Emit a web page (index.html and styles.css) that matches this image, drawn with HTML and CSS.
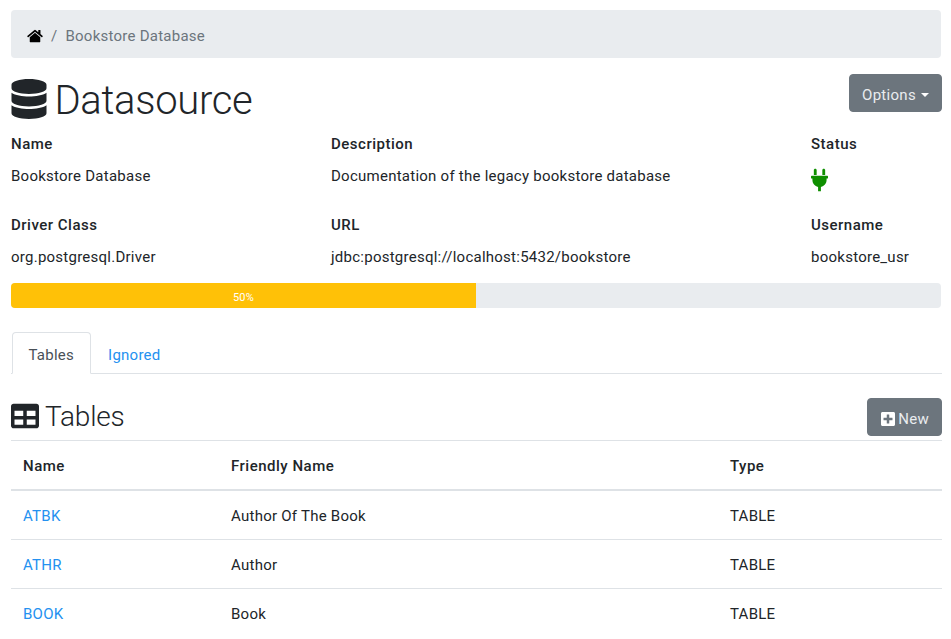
FILE: index.html
```html
<!DOCTYPE html>
<html lang="en">
<head>
  <meta charset="UTF-8">
  <title>Datasource</title>
  <link rel="stylesheet" href="styles.css">
</head>
<body>
  <nav class="breadcrumb">
    <a href="#" class="home-link"><svg class="icon" viewBox="0 0 576 512"><path d="M280.37 148.26L96 300.11V464a16 16 0 0 0 16 16H464a16 16 0 0 0 16-16V300L295.67 148.26a12.19 12.19 0 0 0-15.3 0zM571.6 251.47L488 182.56V44.05a12 12 0 0 0-12-12h-56a12 12 0 0 0-12 12v72.61L318.47 43a48 48 0 0 0-61 0L4.34 251.47a12 12 0 0 0-1.6 16.9l25.5 31A12 12 0 0 0 45.15 301l235.22-193.74a12.19 12.19 0 0 1 15.3 0L530.9 301a12 12 0 0 0 16.9-1.6l25.5-31a12 12 0 0 0-1.7-16.93z"/></svg></a>
    <span class="crumb-sep">/</span>
    <span class="crumb-active">Bookstore Database</span>
  </nav>

  <div class="page-head">
    <h1><svg class="icon" viewBox="0 0 448 512"><path d="M448 73.143v45.714C448 159.143 347.667 192 224 192S0 159.143 0 118.857V73.143C0 32.857 100.333 0 224 0s224 32.857 224 73.143zM448 176v102.857C448 319.143 347.667 352 224 352S0 319.143 0 278.857V176c48.125 33.143 136.208 48.572 224 48.572S399.874 209.143 448 176zm0 160v102.857C448 479.143 347.667 512 224 512S0 479.143 0 438.857V336c48.125 33.143 136.208 48.572 224 48.572S399.874 369.143 448 336z"/></svg> Datasource</h1>
    <button type="button" class="btn">Options<span class="caret"></span></button>
  </div>

  <div class="details">
    <div class="detail-label">Name</div>
    <div class="detail-label">Description</div>
    <div class="detail-label">Status</div>
    <div class="detail-value">Bookstore Database</div>
    <div class="detail-value">Documentation of the legacy bookstore database</div>
    <div class="detail-value"><svg class="icon plug" viewBox="0 0 384 512"><path d="M256 144V32c0-17.673 14.327-32 32-32s32 14.327 32 32v112h-64zm112 16H16c-8.837 0-16 7.163-16 16v32c0 8.837 7.163 16 16 16h16v32c0 77.406 54.969 141.971 128 156.796V512h64v-99.204c73.031-14.825 128-79.39 128-156.796v-32h16c8.837 0 16-7.163 16-16v-32c0-8.837-7.163-16-16-16zm-240-16V32c0-17.673-14.327-32-32-32S64 14.327 64 32v112h64z"/></svg></div>
    <div class="detail-label">Driver Class</div>
    <div class="detail-label">URL</div>
    <div class="detail-label">Username</div>
    <div class="detail-value">org.postgresql.Driver</div>
    <div class="detail-value">jdbc:postgresql://localhost:5432/bookstore</div>
    <div class="detail-value">bookstore_usr</div>
  </div>

  <div class="progress"><div class="progress-bar" style="width: 50%">50%</div></div>

  <ul class="tabs">
    <li class="tab active">Tables</li>
    <li class="tab"><a href="#">Ignored</a></li>
  </ul>

  <div class="section-head">
    <h3><svg class="icon" viewBox="0 0 512 512"><path d="M464 32H48C21.49 32 0 53.49 0 80v352c0 26.51 21.49 48 48 48h416c26.51 0 48-21.49 48-48V80c0-26.51-21.49-48-48-48zM224 416H64v-96h160v96zm0-160H64v-96h160v96zm224 160H288v-96h160v96zm0-160H288v-96h160v96z"/></svg> Tables</h3>
    <button type="button" class="btn btn-new"><svg class="icon" viewBox="0 0 448 512"><path d="M400 32H48C21.5 32 0 53.5 0 80v352c0 26.5 21.5 48 48 48h352c26.5 0 48-21.5 48-48V80c0-26.5-21.5-48-48-48zm-32 252c0 6.6-5.4 12-12 12h-92v92c0 6.6-5.4 12-12 12h-56c-6.6 0-12-5.4-12-12v-92H92c-6.6 0-12-5.4-12-12v-56c0-6.6 5.4-12 12-12h92v-92c0-6.6 5.4-12 12-12h56c6.6 0 12 5.4 12 12v92h92c6.6 0 12 5.4 12 12v56z"/></svg> New</button>
  </div>

  <table class="data-table">
    <thead>
      <tr><th class="col-name">Name</th><th class="col-friendly">Friendly Name</th><th>Type</th></tr>
    </thead>
    <tbody>
      <tr><td><a href="#">ATBK</a></td><td>Author Of The Book</td><td>TABLE</td></tr>
      <tr><td><a href="#">ATHR</a></td><td>Author</td><td>TABLE</td></tr>
      <tr><td><a href="#">BOOK</a></td><td>Book</td><td>TABLE</td></tr>
    </tbody>
  </table>
</body>
</html>
```

FILE: styles.css
```css
* {
  box-sizing: border-box;
}

body {
  margin: 0;
  padding: 10px 9px 0 11px;
  font-family: Roboto, "Liberation Sans", sans-serif;
  font-size: 15px;
  line-height: 24px;
  letter-spacing: 0.25px;
  color: #212529;
  background: #fff;
}

a {
  color: #2491f0;
  text-decoration: none;
}

.icon {
  display: inline-block;
  height: 1em;
  fill: currentColor;
  vertical-align: -0.125em;
}

.breadcrumb {
  display: flex;
  align-items: center;
  height: 48px;
  margin-right: 1px;
  padding: 3px 16px 0;
  background: #e9ecef;
  border-radius: 4px;
}

.home-link {
  display: flex;
  color: #000;
}

.home-link .icon {
  width: 16px;
  height: 14px;
}

.crumb-sep {
  margin: 0 8px;
  color: #6c757d;
}

.crumb-active {
  color: #6c757d;
}

.page-head {
  display: flex;
  justify-content: space-between;
  align-items: flex-start;
  margin-top: 16px;
}

h1 {
  margin: 0;
  padding-top: 1px;
  font-size: 40px;
  font-weight: 300;
  line-height: 52px;
  letter-spacing: -0.3px;
}

h1 .icon {
  width: 36px;
  margin-right: -2px;
}

.btn {
  padding: 8px 12px 4px;
  font-family: inherit;
  font-size: 15px;
  line-height: 24px;
  letter-spacing: 0.3px;
  height: 38px;
  color: #e9ecef;
  background: #6c757d;
  border: 1px solid #6c757d;
  border-radius: 4px;
}

.caret {
  display: inline-block;
  margin-left: 5px;
  vertical-align: 3px;
  border-top: 4px solid #fff;
  border-left: 4px solid transparent;
  border-right: 4px solid transparent;
}

.details {
  display: grid;
  grid-template-columns: 320px 480px 1fr;
  margin-top: 5px;
}

.detail-label {
  font-weight: 500;
  letter-spacing: 0.5px;
  height: 32px;
}

.detail-value {
  height: 49px;
}

.plug {
  display: block;
  width: 17px;
  height: 24px;
  margin-top: 4px;
  color: #0f8f00;
}

.progress {
  height: 25px;
  margin-top: -11px;
  margin-right: 1px;
  background: #e9ecef;
  border-radius: 4px;
  overflow: hidden;
}

.progress-bar {
  height: 100%;
  font-size: 11px;
  line-height: 30px;
  text-align: center;
  color: #fff;
  background: #ffc107;
}

.tabs {
  display: flex;
  gap: 1px;
  margin: 24px 0 0;
  padding: 0 0 0 1px;
  list-style: none;
  border-bottom: 1px solid #dee2e6;
}

.tab {
  height: 42px;
  padding: 10px 15.5px 8px;
  margin-bottom: -1px;
  color: #495057;
  border: 1px solid transparent;
  border-radius: 4px 4px 0 0;
}

.tab.active {
  background: #fff;
  border-color: #dee2e6 #dee2e6 #fff;
}

.section-head {
  display: flex;
  justify-content: space-between;
  align-items: flex-start;
  height: 67px;
  padding-top: 24px;
  border-bottom: 1px solid #dee2e6;
}

h3 {
  margin: 0;
  font-size: 28px;
  font-weight: 300;
  line-height: 38px;
  letter-spacing: -0.2px;
}

.btn-new {
  padding: 8px 12px 4px 13px;
  display: flex;
  align-items: center;
  gap: 3px;
}

.btn-new .icon {
  width: 14px;
  height: 16px;
  color: #fff;
}

.data-table {
  width: 100%;
  border-collapse: collapse;
}

.data-table th,
.data-table td {
  padding: 13px 12px 11px;
  text-align: left;
  line-height: 24px;
  border-top: 1px solid #dee2e6;
}

.data-table thead th {
  border-top: 0;
  font-weight: 500;
  letter-spacing: 0.5px;
  border-bottom: 2px solid #dee2e6;
}

.col-name {
  width: 208px;
}

.col-friendly {
  width: 499px;
}
```
